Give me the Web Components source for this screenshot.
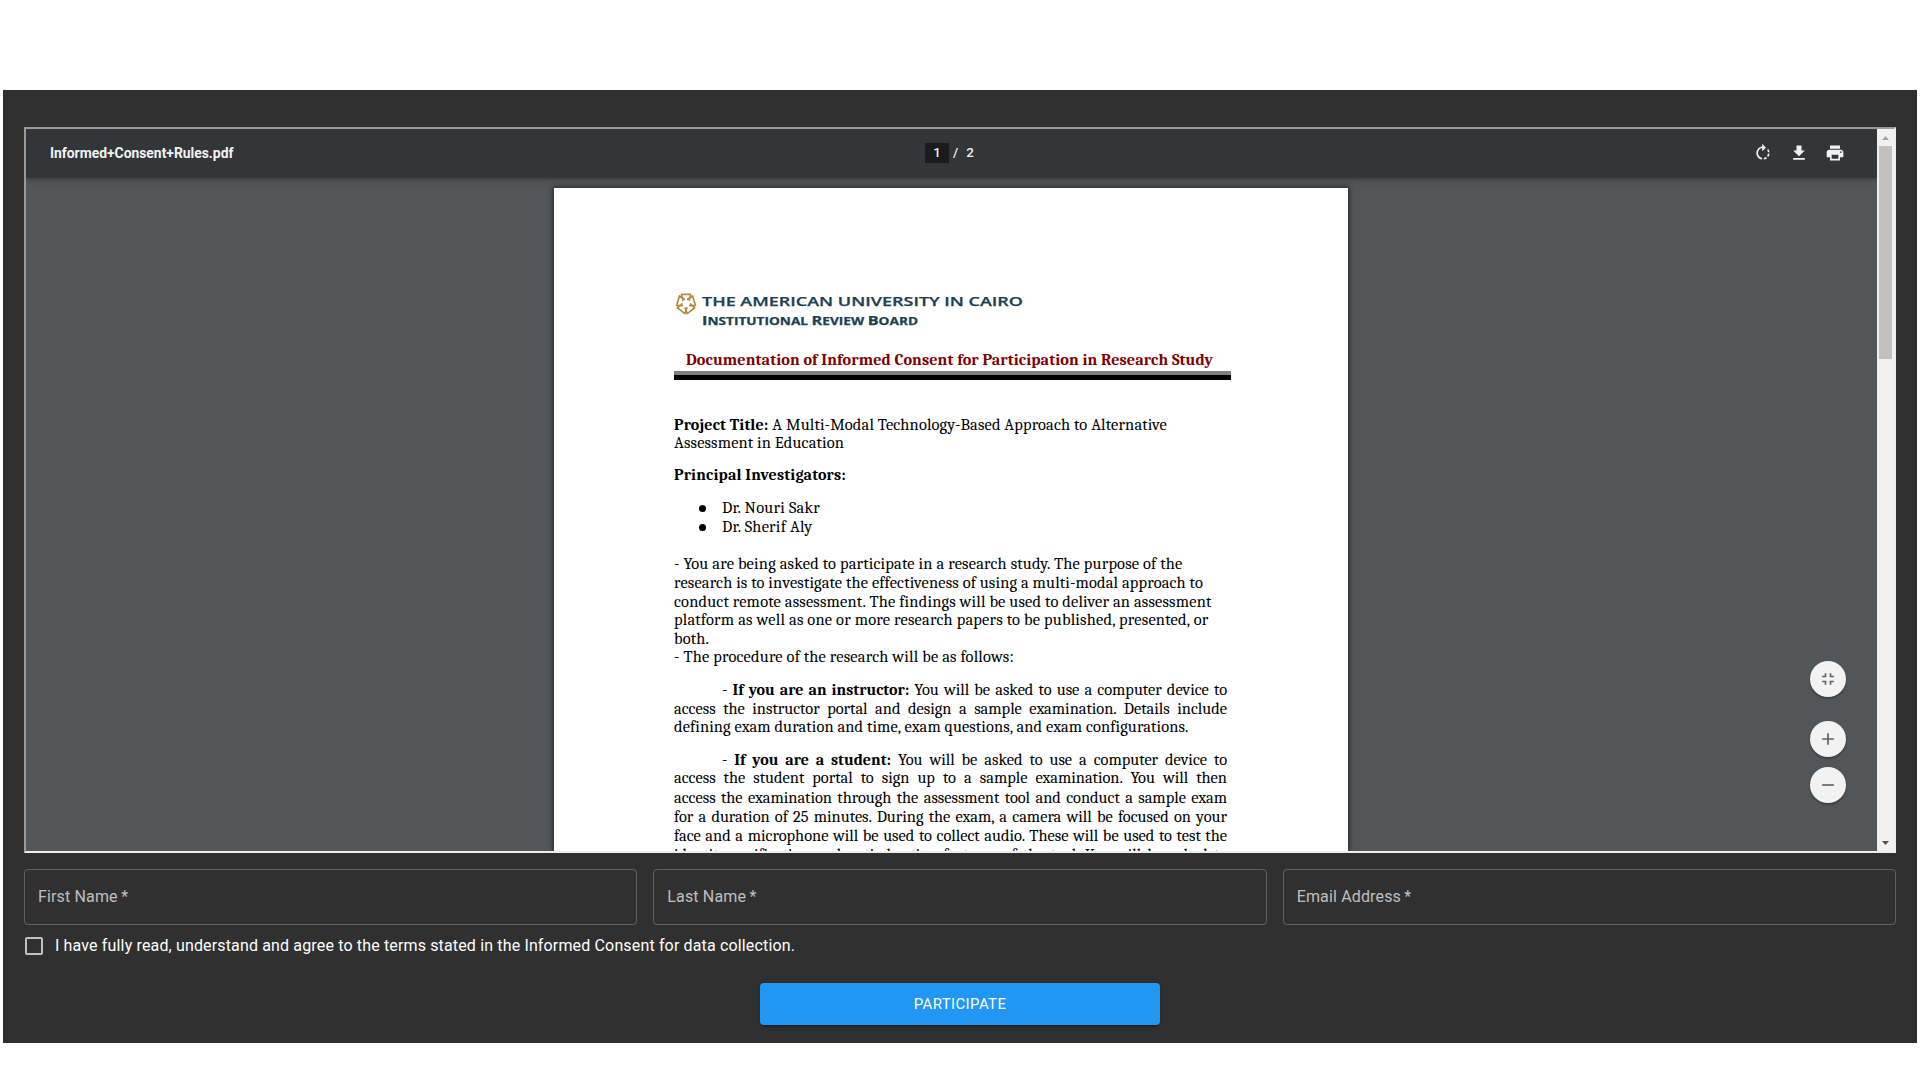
<!DOCTYPE html>
<html lang="en">
<head>
<meta charset="utf-8">
<title>Informed Consent</title>
<style>
html,body{margin:0;background:#fff}
body{height:1080px;overflow:hidden;font-family:Roboto,"Liberation Sans",sans-serif}
</style>
</head>
<body>
<consent-page></consent-page>
<script>
const define = (name, html, setup) => customElements.define(name, class extends HTMLElement {
  connectedCallback() {
    if (this.shadowRoot) return;
    this.attachShadow({mode: 'open'}).innerHTML = html;
    if (setup) setup(this, this.shadowRoot);
  }
});

// One line of typeset text: h = line pitch, w = measured width, x = indent.
define('doc-line', `
<style>
:host{display:flex;align-items:flex-end;white-space:pre;font:16.4px/18px Cambria,Caladea,"Liberation Serif",serif;color:#000}
::slotted(b){font-weight:700;font-size:16px}
span{display:inline-block;flex:none}
</style><span><slot></slot></span>`, (el, root) => {
  const span = root.querySelector('span');
  el.style.height = el.getAttribute('h') + 'px';
  el.style.paddingLeft = (el.getAttribute('x') || 0) + 'px';
  const width = +el.getAttribute('w'), text = el.textContent;
  if (!width) return;
  const justified = el.hasAttribute('justify');
  const rest = width - span.getBoundingClientRect().width;
  if (justified) span.style.wordSpacing = rest / (text.split(' ').length - 1) + 'px';
  else span.style.letterSpacing = rest / text.length + 'px';
});

define('doc-bullet', `
<style>
:host{display:flex;padding-left:25px;align-items:flex-end}
i{width:7px;height:7px;border-radius:50%;background:#000;margin:0 16px 5px 0}
</style><i></i><slot></slot>`);

define('auc-logo', `
<style>:host{display:block;height:40px}svg{display:block}
text{font-family:"Open Sans","Liberation Sans",sans-serif;font-weight:600;fill:#1c3f52;stroke:#1c3f52;stroke-width:.25}</style>
<svg width="350" height="40" viewBox="0 0 350 40">
 <defs><path id="petal" d="M8.6 10.4L7 4.4H17L15.4 10.4"/></defs>
 <g fill="none" stroke="#b28a42" stroke-width="1.7" stroke-linejoin="round" stroke-linecap="round" transform="translate(.9 0) scale(.93 1)">
  <use href="#petal"/><use href="#petal" transform="rotate(72 12 13.4)"/><use href="#petal" transform="rotate(144 12 13.4)"/><use href="#petal" transform="rotate(216 12 13.4)"/><use href="#petal" transform="rotate(288 12 13.4)"/>
 </g>
 <text x="28" y="16" font-size="12.6" textLength="321" lengthAdjust="spacingAndGlyphs">THE AMERICAN UNIVERSITY IN CAIRO</text>
 <text x="28" y="35" font-size="10.4" style="font-weight:700" textLength="216" lengthAdjust="spacingAndGlyphs"><tspan font-size="12.4">I</tspan>NSTITUTIONAL <tspan font-size="12.4">R</tspan>EVIEW <tspan font-size="12.4">B</tspan>OARD</text>
</svg>`);

define('pdf-page', `
<style>
:host{display:block;box-sizing:border-box;width:794px;height:663px;flex:none;background:#fff;padding:102px 117px 0 120px;box-shadow:0 0 5px 1px rgba(0,0,0,.55)}
.heading{color:#800000;font-weight:700;font-size:16.2px}
.rule{width:557px;height:5px;margin-top:2px;border-top:4px solid #808080;background:#000}
</style>
<auc-logo></auc-logo>
<doc-line class="heading" h="39" x="12" w="527">Documentation of Informed Consent for Participation in Research Study</doc-line>
<div class="rule"></div>
<doc-line h="54" w="493"><b>Project Title:</b> A Multi-Modal Technology-Based Approach to Alternative</doc-line>
<doc-line h="18" w="170">Assessment in Education</doc-line>
<doc-line h="32" w="172"><b>Principal Investigators:</b></doc-line>
<doc-bullet><doc-line h="33" w="98">Dr. Nouri Sakr</doc-line></doc-bullet>
<doc-bullet><doc-line h="19" w="90.5">Dr. Sherif Aly</doc-line></doc-bullet>
<doc-line h="37" w="508.5">- You are being asked to participate in a research study. The purpose of the</doc-line>
<doc-line h="19" w="529">research is to investigate the effectiveness of using a multi-modal approach to</doc-line>
<doc-line h="19" w="537.5">conduct remote assessment. The findings will be used to deliver an assessment</doc-line>
<doc-line h="18" w="534.5">platform as well as one or more research papers to be published, presented, or</doc-line>
<doc-line h="19" w="35">both.</doc-line>
<doc-line h="18" w="340">- The procedure of the research will be as follows:</doc-line>
<doc-line h="33" x="48" w="505" justify>- <b>If you are an instructor:</b> You will be asked to use a computer device to</doc-line>
<doc-line h="19" w="553" justify>access the instructor portal and design a sample examination. Details include</doc-line>
<doc-line h="18" w="514.5">defining exam duration and time, exam questions, and exam configurations.</doc-line>
<doc-line h="33" x="48" w="505" justify>- <b>If you are a student:</b> You will be asked to use a computer device to</doc-line>
<doc-line h="18" w="553" justify>access the student portal to sign up to a sample examination. You will then</doc-line>
<doc-line h="20" w="553" justify>access the examination through the assessment tool and conduct a sample exam</doc-line>
<doc-line h="19" w="553" justify>for a duration of 25 minutes. During the exam, a camera will be focused on your</doc-line>
<doc-line h="19" w="553" justify>face and a microphone will be used to collect audio. These will be used to test the</doc-line>
<doc-line h="19" w="553" justify>identity verification and anti-cheating features of the tool. You will be asked to</doc-line>`);

define('pdf-toolbar', `
<style>
:host{display:grid;grid-template-columns:1fr auto 1fr;align-items:center;box-sizing:border-box;height:48px;flex:none;padding:0 32px 0 24px;background:#323639;color:#f1f1f1;font-size:13.92px;font-weight:500;position:relative;z-index:1;box-shadow:0 -2px 8px rgba(0,0,0,.09),0 4px 8px rgba(0,0,0,.06),0 1px 2px rgba(0,0,0,.3),0 2px 6px rgba(0,0,0,.15)}
.name{font-weight:700;letter-spacing:-.02px}
.pages{display:flex;align-items:center;height:20px;font-size:13.4px;line-height:20px;transform:translateX(2px)}
.cur{width:24px;text-align:center;background:#191b1c}
.sep{margin:0 8px 0 4px}
.tools{display:flex;justify-content:flex-end;gap:16px}
svg{width:20px;height:20px;fill:#f1f1f1}
</style>
<span class="name">Informed+Consent+Rules.pdf</span>
<div class="pages"><span class="cur">1</span><span class="sep">/</span><span>2</span></div>
<div class="tools">
<svg viewBox="0 0 24 24"><path d="M15.55 5.55L11 1v3.07C7.06 4.56 4 7.92 4 12s3.05 7.44 7 7.93v-2.02c-2.84-.48-5-2.94-5-5.91s2.16-5.43 5-5.91V10l4.55-4.45zM19.93 11c-.17-1.39-.72-2.73-1.62-3.89l-1.42 1.42c.54.75.88 1.6 1.02 2.47h2.02zM13 17.9v2.02c1.39-.17 2.74-.71 3.9-1.61l-1.44-1.44c-.75.54-1.59.89-2.46 1.03zm3.89-2.42l1.42 1.41c.9-1.16 1.45-2.5 1.62-3.89h-2.02c-.14.87-.48 1.72-1.02 2.48z"/></svg>
<svg viewBox="0 0 24 24"><path d="M19 9h-4V3H9v6H5l7 7 7-7zM5 18v2h14v-2H5z"/></svg>
<svg viewBox="0 0 24 24"><path d="M19 8H5c-1.66 0-3 1.34-3 3v6h4v4h12v-4h4v-6c0-1.66-1.34-3-3-3zm-3 11H8v-5h8v5zm3-7c-.55 0-1-.45-1-1s.45-1 1-1 1 .45 1 1-.45 1-1 1zm-1-9H6v4h12V3z"/></svg>
</div>`);

define('zoom-controls', `
<style>
:host{position:absolute;right:31px;bottom:48px;display:flex;flex-direction:column}
button{width:36px;height:36px;border:0;border-radius:50%;padding:0;display:grid;place-items:center;background:#f2f2f2;box-shadow:0 2px 2px rgba(0,0,0,.24),0 0 2px rgba(0,0,0,.12)}
svg{width:20px;height:20px;fill:#616161;display:block}
.fit{margin-bottom:24px}.in{margin-bottom:10px}
</style>
<button class="fit" aria-label="Fit to page"><svg viewBox="0 0 24 24"><path d="M5 16h3v3h2v-5H5v2zm3-8H5v2h5V5H8v3zm6 11h2v-3h3v-2h-5v5zm2-11V5h-2v5h5V8h-3z"/></svg></button>
<button class="in" aria-label="Zoom in"><svg viewBox="0 0 24 24"><path d="M19 13h-6v6h-2v-6H5v-2h6V5h2v6h6v2z"/></svg></button>
<button aria-label="Zoom out"><svg viewBox="0 0 24 24"><path d="M5 11h14v2H5z"/></svg></button>`);

define('scroll-bar', `
<style>
:host{display:flex;flex-direction:column;align-items:center;width:17px;flex:none;background:#f1f1f1}
.btn{height:17px;display:grid;place-items:center}
svg{display:block}
.thumb{width:13px;height:213px;background:#c1c1c1;margin-bottom:auto}
</style>
<div class="btn"><svg width="7" height="4" viewBox="0 0 7 4"><path d="M0 4L3.5 0 7 4Z" fill="#a3a3a3"/></svg></div>
<div class="thumb"></div>
<div class="btn"><svg width="7" height="4" viewBox="0 0 7 4"><path d="M0 0L3.5 4 7 0Z" fill="#505050"/></svg></div>`);

define('pdf-viewer', `
<style>
:host{display:flex;box-sizing:border-box;height:726px;border:2px solid;border-color:#9a9a9a #eee #eee #9a9a9a;overflow:hidden}
.main{flex:1;display:flex;flex-direction:column;position:relative;overflow:hidden;background:#525659}
.view{flex:1;overflow:hidden;display:flex;justify-content:center;align-items:flex-start;padding:11px 1px 0 0}
</style>
<div class="main"><pdf-toolbar></pdf-toolbar><div class="view"><pdf-page></pdf-page></div><zoom-controls></zoom-controls></div>
<scroll-bar></scroll-bar>`);

define('text-field', `
<style>
:host{flex:1;display:flex;align-items:center;box-sizing:border-box;height:56px;padding:0 13px 2px;border:1px solid rgba(255,255,255,.23);border-radius:4px;color:rgba(255,255,255,.7);font-size:16px;letter-spacing:.15px}
</style><span><slot></slot>&#8201;*</span>`);

define('check-box', `
<style>
:host{display:flex;align-items:center;gap:12px;height:24px;padding-left:1px;color:#fff;font-size:16px;letter-spacing:.15px}
i{box-sizing:border-box;width:18px;height:18px;border:2px solid rgba(255,255,255,.7);border-radius:2px}
span{padding-bottom:2px}
</style><i></i><span><slot></slot></span>`);

define('action-button', `
<style>
:host{display:block;width:400px;height:42px;margin:0 auto}
button{width:100%;height:100%;border:0;border-radius:4px;background:#2196f3;color:#fff;font:400 15px/26px Roboto,sans-serif;letter-spacing:.38px;box-shadow:0 3px 1px -2px rgba(0,0,0,.2),0 2px 2px rgba(0,0,0,.14),0 1px 5px rgba(0,0,0,.12)}
</style><button><slot></slot></button>`);

define('consent-page', `
<style>
:host{display:flex;flex-direction:column;box-sizing:border-box;height:953px;margin:90px 3px 0;padding:37px 21px 0;background:#303030}
.fields{display:flex;gap:16px;margin-top:16px}
check-box{margin-top:9px}
action-button{margin-top:25px}
</style>
<pdf-viewer></pdf-viewer>
<div class="fields"><text-field>First Name</text-field><text-field>Last Name</text-field><text-field>Email Address</text-field></div>
<check-box>I have fully read, understand and agree to the terms stated in the Informed Consent for data collection.</check-box>
<action-button>PARTICIPATE</action-button>`);
</script>
</body>
</html>
